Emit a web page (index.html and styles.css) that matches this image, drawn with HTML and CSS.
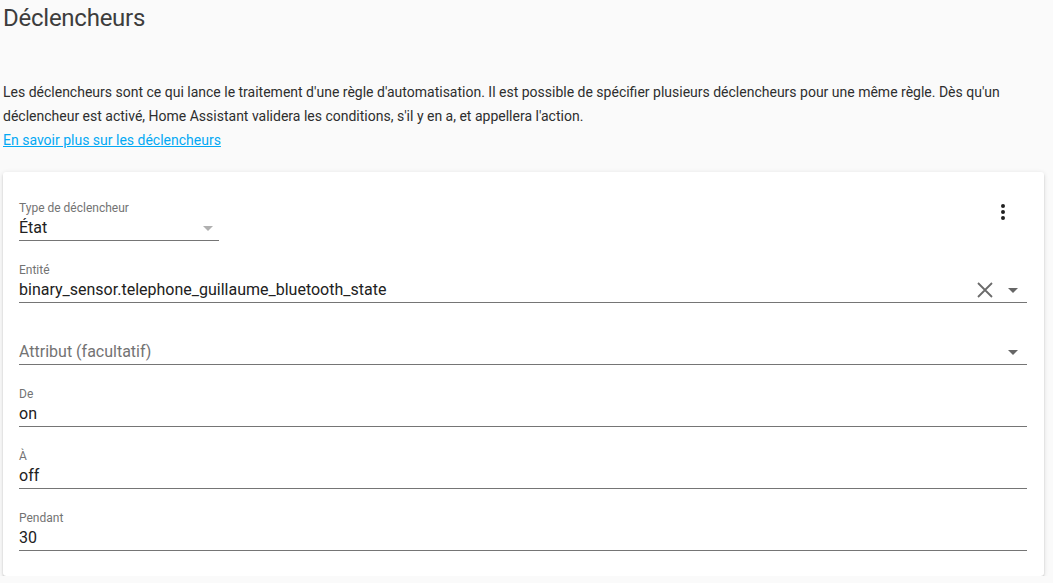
FILE: index.html
```html
<!DOCTYPE html>
<html lang="fr">
<head>
<meta charset="utf-8">
<link rel="stylesheet" href="styles.css">
</head>
<body>
<div class="page">
  <h1 class="header">Déclencheurs</h1>
  <p class="intro">Les déclencheurs sont ce qui lance le traitement d'une règle d'automatisation. Il est possible de spécifier plusieurs déclencheurs pour une même règle. Dès qu'un<br>déclencheur est activé, Home Assistant validera les conditions, s'il y en a, et appellera l'action.<br><a href="#" class="link">En savoir plus sur les déclencheurs</a></p>
  <div class="card">
    <div class="card-top">
      <div class="field field-narrow">
        <div class="label">Type de déclencheur</div>
        <div class="value-row">
          <span class="value">État</span>
          <span class="arrow arrow-light"></span>
        </div>
      </div>
      <button class="menu" aria-label="menu">
        <svg width="24" height="24" viewBox="0 0 24 24"><path fill="#212121" d="M12 16a2 2 0 1 1 0 4 2 2 0 0 1 0-4zm0-6a2 2 0 1 1 0 4 2 2 0 0 1 0-4zm0-6a2 2 0 1 1 0 4 2 2 0 0 1 0-4z"/></svg>
      </button>
    </div>
    <div class="field">
      <div class="label">Entité</div>
      <div class="value-row">
        <span class="value">binary_sensor.telephone_guillaume_bluetooth_state</span>
        <svg class="clear" width="18" height="18" viewBox="0 0 18 18"><path d="M2 2 L16 16 M16 2 L2 16" stroke="#6b6b6b" stroke-width="1.8" fill="none"/></svg>
        <span class="arrow"></span>
      </div>
    </div>
    <div class="field">
      <div class="label"></div>
      <div class="value-row">
        <span class="value placeholder">Attribut (facultatif)</span>
        <span class="arrow"></span>
      </div>
    </div>
    <div class="field">
      <div class="label">De</div>
      <div class="value-row"><span class="value">on</span></div>
    </div>
    <div class="field">
      <div class="label">À</div>
      <div class="value-row"><span class="value">off</span></div>
    </div>
    <div class="field">
      <div class="label">Pendant</div>
      <div class="value-row"><span class="value">30</span></div>
    </div>
  </div>
</div>
</body>
</html>
```
FILE: styles.css
```css
html, body {
  margin: 0;
  padding: 0;
  background: #fafafa;
  font-family: Roboto, "Liberation Sans", sans-serif;
}
.page {
  padding: 2px 9px 0 3px;
}
.header {
  margin: 0;
  font-size: 24px;
  line-height: 32px;
  font-weight: 400;
  letter-spacing: -0.25px;
  color: #3d3d3d;
}
.intro {
  margin: 46px 0 0 0;
  font-size: 14px;
  line-height: 24px;
  color: #2e2e2e;
}
.link {
  color: #03a9f4;
  text-decoration: underline;
}
.card {
  margin-top: 20px;
  background: #fff;
  border-radius: 3px;
  box-shadow: 0 2px 2px 0 rgba(0,0,0,0.14), 0 1px 5px 0 rgba(0,0,0,0.12), 0 3px 1px -2px rgba(0,0,0,0.2);
  padding: 7px 17px 25px 16px;
}
.card-top {
  display: flex;
  justify-content: space-between;
  align-items: flex-start;
}
.menu {
  border: 0;
  background: none;
  padding: 0;
  margin: 21px 12px 0 0;
  width: 24px;
  height: 24px;
  display: flex;
}
.field {
  padding-top: 21px;
  border-bottom: 1px solid #757575;
}
.field-narrow {
  width: 200px;
}
.label {
  font-size: 12px;
  line-height: 16px;
  height: 16px;
  color: #737373;
}
.value-row {
  display: flex;
  align-items: center;
  height: 24px;
}
.value {
  flex: 1;
  font-size: 16px;
  line-height: 24px;
  color: #212121;
}
.placeholder {
  color: #737373;
}
.clear {
  margin-right: 14px;
}
.arrow {
  width: 0;
  height: 0;
  border-left: 5px solid transparent;
  border-right: 5px solid transparent;
  border-top: 5px solid #666;
  margin-right: 9px;
}
.arrow-light {
  border-top-color: #b0b0b0;
  margin-right: 6px;
}
```
